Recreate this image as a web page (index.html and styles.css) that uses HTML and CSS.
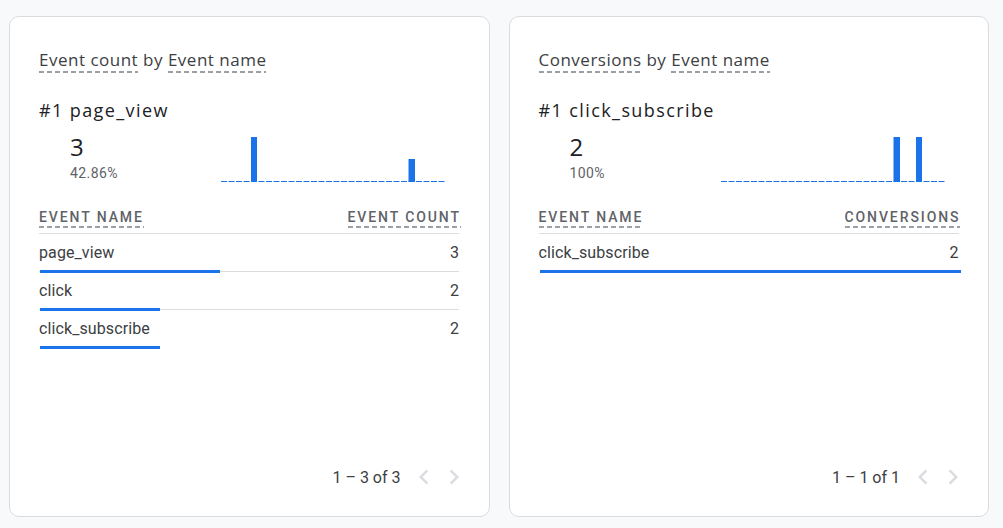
FILE: index.html
```html
<!DOCTYPE html>
<html lang="en">
<head>
    <meta charset="UTF-8">
    <meta name="viewport" content="width=device-width, initial-scale=1.0">
    <title>Events</title>
    <link rel="stylesheet" href="styles.css">
</head>
<body>
    <main class="cards">
        <section class="card">
            <h2 class="card-title"><span class="dim">Event count</span> by <span class="dim">Event name</span></h2>
            <div class="top-item"><span class="rank">#1</span> page_view</div>
            <div class="summary">
                <div class="metric">
                    <div class="metric-value">3</div>
                    <div class="metric-pct">42.86%</div>
                </div>
                <svg class="spark" width="224" height="46" viewBox="0 0 224 46">
                    <line x1="0" y1="45.5" x2="224" y2="45.5" stroke="#1a73e8" stroke-width="1" stroke-dasharray="6 1.5"/>
                    <rect x="30" y="1" width="6" height="45" fill="#1a73e8"/>
                    <rect x="187.5" y="23" width="6.5" height="23" fill="#1a73e8"/>
                </svg>
            </div>
            <table class="data">
                <thead>
                    <tr>
                        <th><span class="dim">EVENT NAME</span></th>
                        <th class="num"><span class="dim">EVENT COUNT</span></th>
                    </tr>
                </thead>
                <tbody>
                    <tr>
                        <td>page_view<div class="bar" style="width: 180px"></div></td>
                        <td class="num">3</td>
                    </tr>
                    <tr>
                        <td>click<div class="bar" style="width: 120px"></div></td>
                        <td class="num">2</td>
                    </tr>
                    <tr>
                        <td>click_subscribe<div class="bar" style="width: 120px"></div></td>
                        <td class="num">2</td>
                    </tr>
                </tbody>
            </table>
            <div class="pager">
                <span class="pager-text">1 – 3 of 3</span>
                <svg class="chev" width="30" height="30" viewBox="0 0 24 24"><path d="M15.41 7.41L14 6l-6 6 6 6 1.41-1.41L10.83 12z"/></svg>
                <svg class="chev" width="30" height="30" viewBox="0 0 24 24"><path d="M10 6L8.59 7.41 13.17 12l-4.58 4.59L10 18l6-6z"/></svg>
            </div>
        </section>

        <section class="card">
            <h2 class="card-title"><span class="dim">Conversions</span> by <span class="dim">Event name</span></h2>
            <div class="top-item"><span class="rank">#1</span> click_subscribe</div>
            <div class="summary">
                <div class="metric">
                    <div class="metric-value">2</div>
                    <div class="metric-pct">100%</div>
                </div>
                <svg class="spark" width="224" height="46" viewBox="0 0 224 46">
                    <line x1="0" y1="45.5" x2="224" y2="45.5" stroke="#1a73e8" stroke-width="1" stroke-dasharray="6 1.5"/>
                    <rect x="172.5" y="1" width="6.5" height="45" fill="#1a73e8"/>
                    <rect x="195" y="1" width="6" height="45" fill="#1a73e8"/>
                </svg>
            </div>
            <table class="data">
                <thead>
                    <tr>
                        <th><span class="dim">EVENT NAME</span></th>
                        <th class="num"><span class="dim">CONVERSIONS</span></th>
                    </tr>
                </thead>
                <tbody>
                    <tr>
                        <td>click_subscribe<div class="bar" style="width: 421px"></div></td>
                        <td class="num">2</td>
                    </tr>
                </tbody>
            </table>
            <div class="pager">
                <span class="pager-text">1 – 1 of 1</span>
                <svg class="chev" width="30" height="30" viewBox="0 0 24 24"><path d="M15.41 7.41L14 6l-6 6 6 6 1.41-1.41L10.83 12z"/></svg>
                <svg class="chev" width="30" height="30" viewBox="0 0 24 24"><path d="M10 6L8.59 7.41 13.17 12l-4.58 4.59L10 18l6-6z"/></svg>
            </div>
        </section>
    </main>
</body>
</html>
```

FILE: styles.css
```css
body {
    margin: 0;
    padding: 0;
    background-color: #f8f9fa;
    font-family: Roboto, "Liberation Sans", sans-serif;
    color: #3c4043;
}
.cards {
    display: flex;
    gap: 19px;
    padding: 16px 14px 11px 9px;
}
.card {
    box-sizing: border-box;
    width: 481px;
    height: 501px;
    background: #fff;
    border: 1px solid #dadce0;
    border-radius: 10px;
    padding: 30px 29px 0 29px;
    display: flex;
    flex-direction: column;
}
.card-title {
    margin: 0;
    font-family: "Open Sans", sans-serif;
    font-size: 17px;
    font-weight: 400;
    letter-spacing: 0.5px;
    line-height: 26px;
    color: #3c4043;
}
.dim {
    padding-bottom: 2px;
    background-image: linear-gradient(to right, #9aa0a6 0 5px, transparent 5px 8px);
    background-size: 8px 2px;
    background-repeat: repeat-x;
    background-position: left bottom;
}
.top-item {
    margin-top: 25px;
    font-family: "Open Sans", sans-serif;
    font-size: 18px;
    letter-spacing: 1.4px;
    line-height: 24px;
    color: #202124;
}
.summary {
    display: flex;
    align-items: flex-end;
    height: 50px;
    margin-top: 10px;
}
.metric {
    width: 151px;
    padding-left: 31px;
    align-self: flex-start;
}
.metric-value {
    font-family: "Open Sans", sans-serif;
    font-size: 24px;
    line-height: 30px;
    color: #202124;
}
.metric-pct {
    margin-top: 2px;
    font-size: 14px;
    letter-spacing: 0.4px;
    line-height: 18px;
    color: #5f6368;
}
.spark {
    display: block;
}
.data {
    margin-top: 18px;
    width: 420px;
    border-collapse: collapse;
    font-size: 16px;
    letter-spacing: 0.1px;
}
.data thead tr {
    height: 33px;
}
.data th {
    font-size: 14px;
    font-weight: 500;
    letter-spacing: 1.9px;
    color: #5f6368;
    text-align: left;
    padding: 0 0 8px;
    vertical-align: bottom;
    border-bottom: 1px solid #dadce0;
}
.data th .dim {
    padding-bottom: 3px;
}
.data th.num .dim {
    margin-right: -1.9px;
}
.data tbody tr {
    height: 38px;
}
.data td {
    padding: 0;
    position: relative;
    border-bottom: 1px solid #dadce0;
}
.data tbody tr:last-child td {
    border-bottom: none;
}
.data .num {
    text-align: right;
}
.bar {
    position: absolute;
    left: 1px;
    bottom: -2px;
    height: 3px;
    background: #1a73e8;
}
.pager {
    margin-top: auto;
    margin-bottom: 24px;
    margin-right: -9px;
    display: flex;
    align-items: center;
    justify-content: flex-end;
    font-size: 16px;
    color: #3c4043;
}
.pager-text {
    margin-right: 8px;
}
.chev {
    fill: #dadce0;
    display: block;
}
```
